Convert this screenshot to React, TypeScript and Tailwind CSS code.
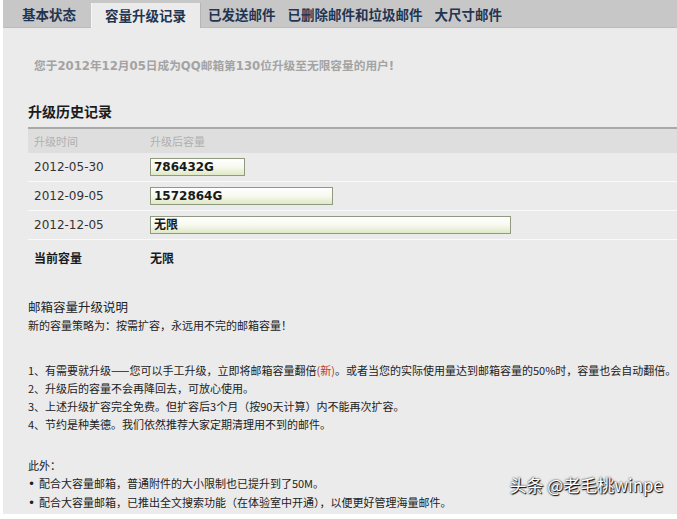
const TABS = ["基本状态", "容量升级记录", "已发送邮件", "已删除邮件和垃圾邮件", "大尺寸邮件"];

const HISTORY = [
  { date: "2012-05-30", size: "786432G", width: "w-[95px]" },
  { date: "2012-09-05", size: "1572864G", width: "w-[183px]" },
  { date: "2012-12-05", size: "无限", width: "w-[361px]" },
];

const cjk = "font-['Noto_Sans_CJK_SC',sans-serif]";
const num = "font-['DejaVu_Sans','Noto_Sans_CJK_SC',sans-serif]";

function Bullet() {
  return <span className="font-['DejaVu_Sans',sans-serif] text-[12px]">• </span>;
}

export default function App() {
  return (
    <div className="h-[519px] w-[677px] overflow-hidden bg-white pl-[3px] pb-[5px]">
      <div className="flex h-full flex-col bg-[#ebebeb]">
        {/* tabs */}
        <div className="flex h-[28px] shrink-0 items-end border-b border-[#bcbcbc] bg-[#c7c7c7] pl-[6px]">
          {TABS.map((t, i) =>
            i === 1 ? (
              <div
                key={t}
                className={`-mb-px flex h-[25px] items-center border-l border-r border-l-[#f4f4f4] border-r-[#b5b5b5] bg-[#ebebeb] pl-[13px] pr-[14px] text-[13.5px] font-bold text-[#1f3552] ${cjk}`}
              >
                {t}
              </div>
            ) : (
              <div
                key={t}
                className={`flex h-[25px] items-center text-[13.5px] font-bold text-[#1f3552] ${cjk} ${
                  i === 0 ? "pl-[13px] pr-[15px]" : "pl-[7px] pr-[5px]"
                }`}
              >
                {t}
              </div>
            )
          )}
        </div>

        <div className="flex-1 pl-[25px] pt-[30px]">
          <p className={`pl-[6px] text-[11.7px] font-bold leading-[16px] text-[#a3a3a3] ${num}`}>
            您于2012年12月05日成为QQ邮箱第130位升级至无限容量的用户!
          </p>

          <h2 className={`mt-[28px] text-[14px] font-bold leading-[18px] text-[#1b1b1b] ${cjk}`}>升级历史记录</h2>

          {/* table */}
          <div className="mt-[7px]">
            <div className={`flex h-[26px] items-center border-t-2 border-[#a9a9a9] bg-[#dedede] text-[11px] text-[#b0b0b0] ${cjk}`}>
              <span className="w-[122px] pl-[6px]">升级时间</span>
              <span>升级后容量</span>
            </div>
            {HISTORY.map((r) => (
              <div key={r.date} className="flex h-[29px] items-center border-b border-[#fafafa]">
                <span className={`w-[122px] pl-[6px] text-[12px] text-[#333] ${num}`}>{r.date}</span>
                <div
                  className={`flex h-[18px] items-center border border-[#8f9a80] bg-gradient-to-b from-[#ffffff] via-[#f7f9ef] to-[#dfe8c6] pl-[3px] text-[12px] font-bold text-[#1a1a1a] ${r.width} ${num}`}
                >
                  {r.size}
                </div>
              </div>
            ))}
            <div className={`flex h-[36px] items-center text-[12px] font-bold text-[#1a1a1a] ${cjk}`}>
              <span className="w-[122px] pl-[6px]">当前容量</span>
              <span>无限</span>
            </div>
          </div>

          {/* notes */}
          <div className={`mt-[22px] text-[#222] ${cjk}`}>
            <p className="text-[12.5px] leading-[18px]">邮箱容量升级说明</p>
            <p className="text-[11px] leading-[18px]">新的容量策略为：按需扩容，永远用不完的邮箱容量！</p>

            <div className="mt-[27px] text-[11px] leading-[18px]">
              <p>
                1、有需要就升级——您可以手工升级，立即将邮箱容量翻倍<span className="text-[#c0392b]">(新)</span>。或者当您的实际使用量达到邮箱容量的50%时，容量也会自动翻倍。
              </p>
              <p>2、升级后的容量不会再降回去，可放心使用。</p>
              <p>3、上述升级扩容完全免费。但扩容后3个月（按90天计算）内不能再次扩容。</p>
              <p>4、节约是种美德。我们依然推荐大家定期清理用不到的邮件。</p>
            </div>

            <div className="relative mt-[23px] text-[11px] leading-[18px]">
              <p>此外：</p>
              <p>
                <Bullet />配合大容量邮箱，普通附件的大小限制也已提升到了50M。
              </p>
              <p>
                <Bullet />配合大容量邮箱，已推出全文搜索功能（在体验室中开通），以便更好管理海量邮件。
              </p>
              <span
                className={`absolute right-[14px] top-[20px] text-[17px] text-white [text-shadow:0_0_2px_#000,1px_1px_1px_#000] ${cjk}`}
              >
                头条 @老毛桃winpe
              </span>
            </div>
          </div>
        </div>
      </div>
    </div>
  );
}
